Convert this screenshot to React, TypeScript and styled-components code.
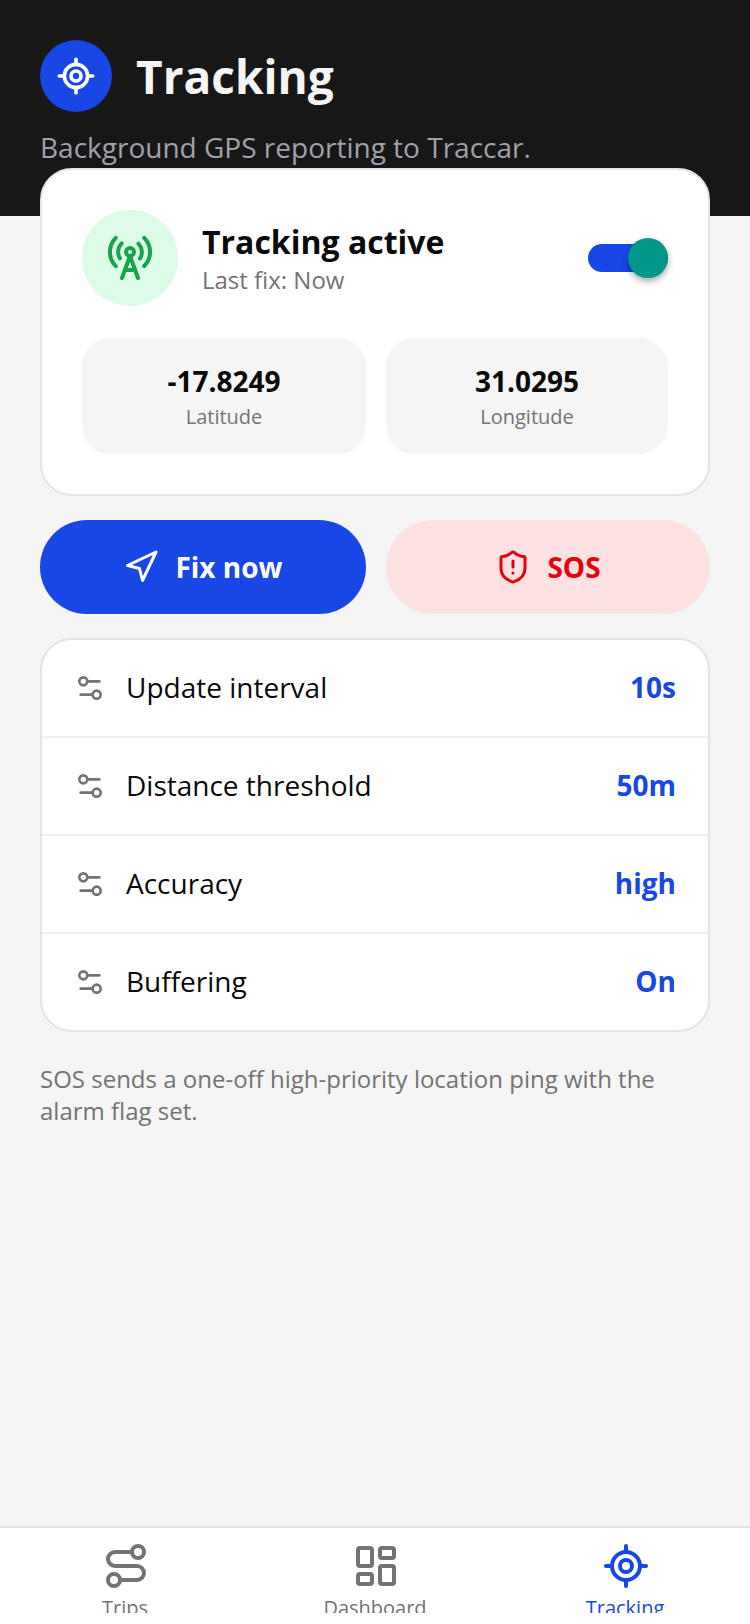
import React from "react";
import styled, { createGlobalStyle } from "styled-components";
import { LocateFixed, RadioTower, Navigation, ShieldAlert, Settings2, Route, LayoutDashboard } from "lucide-react";

const Global = createGlobalStyle`
  html, body { margin: 0; padding: 0; background: #f5f5f5; }
  * { box-sizing: border-box; }
  body { font-family: "Open Sans", "Noto Sans", sans-serif; }
`;
const Page = styled.div`
  width: 750px; height: 1624px; display: flex; flex-direction: column; overflow: hidden; background: #f5f5f5;
`;
const Hero = styled.header`
  height: 216px; background: #171717; padding: 40px 40px 0; flex: none;
`;
const HeroRow = styled.div`display: flex; align-items: center; gap: 24px;`;
const HeroBadge = styled.div`
  width: 72px; height: 72px; border-radius: 50%; background: #1847e6; color: #fff;
  display: flex; align-items: center; justify-content: center;
`;
const HeroTitle = styled.h1`
  margin: 0; font-size: 46px; line-height: 72px; font-weight: 700; color: #f5f5f5;
`;
const HeroSub = styled.p`
  margin: 17px 0 0; font-size: 28px; line-height: 36px; color: #a1a1aa;
`;
const Main = styled.main`
  flex: 1; padding: 0 40px; margin-top: -48px; display: flex; flex-direction: column; min-height: 0;
`;
const Card = styled.section`
  background: #fff; border: 2px solid #e5e5e5; border-radius: 32px;
`;
const StatusCard = styled(Card)`padding: 40px; height: 328px;`;
const StatusRow = styled.div`display: flex; align-items: center;`;
const StatusIcon = styled.div`
  width: 96px; height: 96px; border-radius: 50%; background: #dcfce7; color: #16a34a;
  display: flex; align-items: center; justify-content: center; flex: none;
`;
const StatusText = styled.div`flex: 1; margin-left: 24px;`;
const StatusTitle = styled.div`font-size: 32px; line-height: 44px; font-weight: 700; color: #0a0a0a;`;
const StatusSub = styled.div`font-size: 24px; line-height: 32px; color: #737373;`;
const Toggle = styled.div`
  position: relative; width: 80px; height: 28px; border-radius: 14px; background: #1847e6; flex: none;
`;
const Knob = styled.div`
  position: absolute; right: 0; top: -6px; width: 40px; height: 40px; border-radius: 50%;
  background: #009688; box-shadow: 0 3px 6px rgba(0,0,0,.35);
`;
const Stats = styled.div`display: grid; grid-template-columns: 284px 282px; gap: 20px; margin-top: 32px;`;
const Stat = styled.div`
  height: 116px; border-radius: 28px; background: #f5f5f5; display: flex; flex-direction: column;
  align-items: center; justify-content: center; padding-top: 2px;
`;
const StatValue = styled.div`font-size: 28px; line-height: 38px; font-weight: 700; color: #0a0a0a;`;
const StatLabel = styled.div`font-size: 20px; line-height: 30px; color: #737373; margin-top: 2px;`;
const Actions = styled.div`display: grid; grid-template-columns: 326px 324px; gap: 20px; margin-top: 24px;`;
const Action = styled.button<{ $danger?: boolean }>`
  height: 94px; border: 0; border-radius: 47px; padding: 0; font: inherit; font-size: 28px; font-weight: 700;
  display: flex; align-items: center; justify-content: center; gap: 16px;
  background: ${p => (p.$danger ? "#fee2e2" : "#1847e6")};
  color: ${p => (p.$danger ? "#e7000b" : "#fff")};
`;
const Settings = styled(Card)`margin-top: 24px; overflow: hidden;`;
const Row = styled.div`
  height: 96px; display: flex; align-items: center; padding: 0 32px; color: #0a0a0a; font-size: 28px;
  & + & { border-top: 2px solid #f0f0f0; height: 98px; }
`;
const RowIcon = styled.span`display: flex; color: #737373; width: 32px; margin-right: 20px;`;
const RowLabel = styled.span`flex: 1; margin-bottom: 2px;`;
const RowValue = styled.span`font-weight: 700; color: #1847e6; margin-bottom: 2px;`;
const Note = styled.p`margin: 31px 0 0; font-size: 24px; line-height: 32px; color: #737373;`;
const Nav = styled.nav`
  flex: none; height: 98px; background: #fff; border-top: 2px solid #e5e5e5;
  display: grid; grid-template-columns: repeat(3, 1fr);
`;
const NavItem = styled.div<{ $active?: boolean }>`
  display: flex; flex-direction: column; align-items: center; padding-top: 14px; height: 85px; overflow: hidden;
  color: ${p => (p.$active ? "#1847e6" : "#737373")};
  & > svg { flex: none; margin-left: 2px; }
`;
const NavLabel = styled.span`font-size: 20px; line-height: 30px; margin-top: 3px; white-space: nowrap; flex: none;`;

export default function App() {
  return (
    <Page>
      <Global />
      <Hero>
        <HeroRow>
          <HeroBadge><LocateFixed size={40} strokeWidth={2.2} /></HeroBadge>
          <HeroTitle>Tracking</HeroTitle>
        </HeroRow>
        <HeroSub>Background GPS reporting to Traccar.</HeroSub>
      </Hero>
      <Main>
        <StatusCard>
          <StatusRow>
            <StatusIcon><RadioTower size={48} strokeWidth={2} /></StatusIcon>
            <StatusText>
              <StatusTitle>Tracking active</StatusTitle>
              <StatusSub>Last fix: Now</StatusSub>
            </StatusText>
            <Toggle><Knob /></Toggle>
          </StatusRow>
          <Stats>
            <Stat><StatValue>-17.8249</StatValue><StatLabel>Latitude</StatLabel></Stat>
            <Stat><StatValue>31.0295</StatValue><StatLabel>Longitude</StatLabel></Stat>
          </Stats>
        </StatusCard>
        <Actions>
          <Action><Navigation size={36} strokeWidth={2} />Fix now</Action>
          <Action $danger><ShieldAlert size={36} strokeWidth={2} />SOS</Action>
        </Actions>
        <Settings>
          {[["Update interval", "10s"], ["Distance threshold", "50m"], ["Accuracy", "high"], ["Buffering", "On"]].map(([l, v]) => (
            <Row key={l}>
              <RowIcon><Settings2 size={32} strokeWidth={2} /></RowIcon>
              <RowLabel>{l}</RowLabel>
              <RowValue>{v}</RowValue>
            </Row>
          ))}
        </Settings>
        <Note>SOS sends a one-off high-priority location ping with the alarm flag set.</Note>
      </Main>
      <Nav>
        <NavItem><Route size={48} strokeWidth={2} /><NavLabel>Trips</NavLabel></NavItem>
        <NavItem><LayoutDashboard size={48} strokeWidth={2} /><NavLabel>Dashboard</NavLabel></NavItem>
        <NavItem $active><LocateFixed size={48} strokeWidth={2} /><NavLabel>Tracking</NavLabel></NavItem>
      </Nav>
    </Page>
  );
}
